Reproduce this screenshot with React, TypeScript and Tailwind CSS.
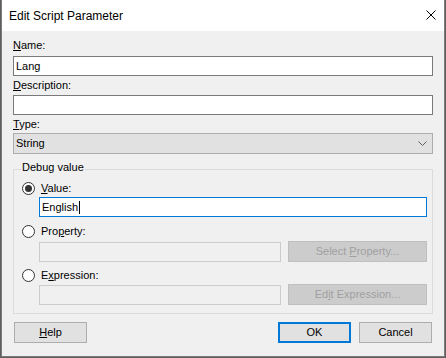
import React from "react";

const font = { fontFamily: '"Liberation Sans", Arial, sans-serif' };

function Label({ children }: { children: React.ReactNode }) {
  return <div className="h-[13px] text-[11px] leading-[13px] text-black">{children}</div>;
}

function TextBox({ value, focused }: { value?: string; focused?: boolean }) {
  return (
    <div
      className={
        "flex h-[20px] items-center bg-white px-[2px] text-[11px] leading-[13px] text-black border " +
        (focused ? "border-[#0078d7]" : "border-[#7a7a7a]")
      }
    >
      <span>{value}</span>
      {focused ? <span className="ml-[1px] h-[13px] w-[1px] bg-black" /> : null}
    </div>
  );
}

function Radio({ checked, children }: { checked?: boolean; children: React.ReactNode }) {
  return (
    <div className="flex h-[13px] items-start gap-[6px] pl-[8px]">
      <span className="flex h-[13px] w-[13px] items-center justify-center rounded-full border border-[#333333] bg-white">
        {checked ? <span className="h-[7px] w-[7px] rounded-full bg-[#333333]" /> : null}
      </span>
      <Label>{children}</Label>
    </div>
  );
}

function Button({
  children,
  primary,
  disabled,
  className,
}: {
  children: React.ReactNode;
  primary?: boolean;
  disabled?: boolean;
  className?: string;
}) {
  return (
    <div
      className={
        "flex h-[21px] items-center justify-center text-[11px] leading-[13px] " +
        (disabled
          ? "border border-[#bfbfbf] bg-[#cccccc] text-[#a0a0a0] "
          : primary
            ? "border-2 border-[#0078d7] bg-[#e1e1e1] text-black "
            : "border border-[#adadad] bg-[#e1e1e1] text-black ") +
        (className ?? "")
      }
    >
      <span>{children}</span>
    </div>
  );
}

export default function App() {
  return (
    <div className="h-[358px] w-[446px] bg-[#5f5f5f]" style={font}>
      <div className="ml-[1px] flex h-[357px] w-[444px] flex-col border-x border-b border-[#7a7a7a] bg-[#f0f0f0]">
        {/* title bar */}
        <div className="flex h-[31px] items-center justify-between bg-white pl-[7px] pr-[8px]">
          <span className="text-[12px] leading-[16px] text-black">Edit Script Parameter</span>
          <svg width="10" height="10" viewBox="0 0 10 10" className="mb-[1px]">
            <path d="M0.5 0.5 L9.5 9.5 M9.5 0.5 L0.5 9.5" stroke="#000" strokeWidth="1" />
          </svg>
        </div>

        <div className="flex flex-col px-[11px] pt-[8px]">
          <Label>
            <u>N</u>ame:
          </Label>
          <div className="mt-[4px]">
            <TextBox value="Lang" />
          </div>
          <div className="mt-[3px]">
            <Label>
              <u>D</u>escription:
            </Label>
          </div>
          <div className="mt-[3px]">
            <TextBox />
          </div>
          <div className="mt-[3px]">
            <Label>
              <u>T</u>ype:
            </Label>
          </div>
          <div className="mt-[2px] flex h-[21px] items-center justify-between border border-[#adadad] bg-[#e1e1e1] pl-[2px] pr-[5px] text-[11px] leading-[13px] text-black">
            <span>String</span>
            <svg width="9" height="5" viewBox="0 0 9 5">
              <path d="M0.5 0.5 L4.5 4.5 L8.5 0.5" stroke="#606060" strokeWidth="1" fill="none" />
            </svg>
          </div>

          {/* group box */}
          <div className="relative mt-[15px] border border-[#dcdcdc] pb-[8px] pt-[12px] pr-[5px]">
            <span className="absolute left-[7px] top-[-9px] bg-[#f0f0f0] px-[1px] text-[11px] leading-[13px] text-black">
              Debug value
            </span>
            <Radio checked>
              <u>V</u>alue:
            </Radio>
            <div className="ml-[25px] mt-[2px]">
              <TextBox value="English" focused />
            </div>
            <div className="mt-[8px]">
              <Radio>
                Pro<u>p</u>erty:
              </Radio>
            </div>
            <div className="ml-[25px] mt-[3px] flex items-start gap-[7px]">
              <div className="mt-[1px] h-[20px] w-[242px] border border-[#cccccc] bg-[#f0f0f0]" />
              <Button disabled className="flex-1">
                Select <u>P</u>roperty...
              </Button>
            </div>
            <div className="mt-[7px]">
              <Radio>
                E<u>x</u>pression:
              </Radio>
            </div>
            <div className="ml-[25px] mt-[2px] flex items-start gap-[7px]">
              <div className="mt-[1px] h-[20px] w-[242px] border border-[#cccccc] bg-[#f0f0f0]" />
              <Button disabled className="flex-1">
                Ed<u>i</u>t Expression...
              </Button>
            </div>
          </div>

          {/* bottom buttons */}
          <div className="mt-[8px] flex items-start">
            <Button className="ml-[1px] w-[73px]">
              <u>H</u>elp
            </Button>
            <div className="flex-1" />
            <Button primary className="w-[73px]">
              OK
            </Button>
            <Button className="ml-[8px] mr-[1px] w-[73px]">Cancel</Button>
          </div>
        </div>
      </div>
    </div>
  );
}
